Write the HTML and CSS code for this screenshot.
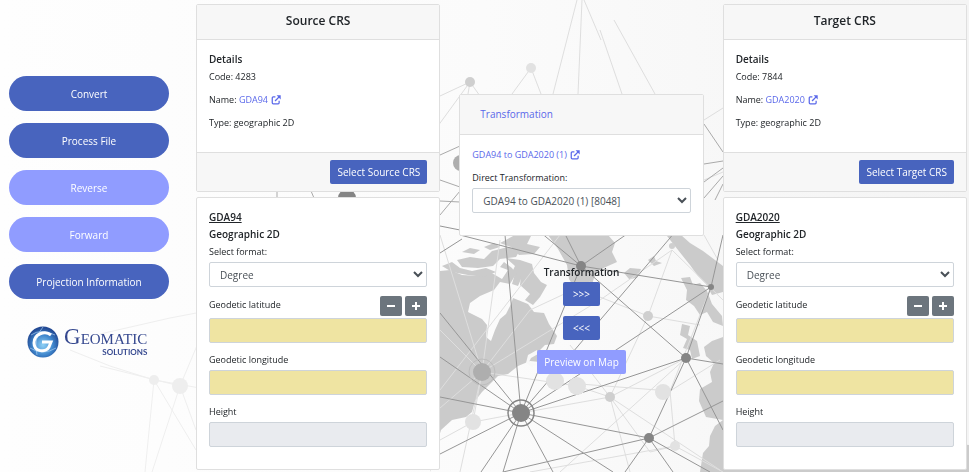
FILE: index.html
```html
<!DOCTYPE html>
<html lang="en">
<head>
    <meta charset="UTF-8">
    <meta name="viewport" content="width=device-width, initial-scale=1">
    <title>Geomatic Solutions</title>
    <link rel="stylesheet" href="styles.css">
</head>
<body>
<svg class="backdrop" viewBox="0 0 969 472" preserveAspectRatio="xMidYMid slice" aria-hidden="true">
    <defs>
        <linearGradient id="paper" x1="0" y1="0" x2="1" y2="0">
            <stop offset="0" stop-color="#fefefe"/>
            <stop offset="0.5" stop-color="#fbfbfb"/>
            <stop offset="1" stop-color="#f4f4f4"/>
        </linearGradient>
    </defs>
    <rect width="969" height="472" fill="url(#paper)"/>
    <!-- land -->
    <g fill="#cbcbcb">
        <path d="M430 272 L450 270 462 275 478 276 490 272 502 279 508 270 500 267 504 262 512 268 516 274 510 284 500 282 494 290 480 296 470 303 468 312 482 319 487 325 486 337 491 341 495 330 500 319 506 314 511 304 513 298 528 304 534 312 544 313 549 324 557 336 554 344 545 345 540 350 546 352 556 356 552 360 540 362 530 361 518 366 508 374 498 376 490 384 482 392 475 401 472 412 466 417 452 420 441 430 438 440 430 472Z"/>
        <path d="M457 260 L470 257 484 259 492 251 508 247 520 250 516 257 500 259 493 266 478 268 462 267Z"/>
        <path d="M442 266 L452 262 460 268 472 271 486 268 496 272 484 277 468 275 452 272Z"/>
        <path d="M462 252 L470 248 480 250 474 254ZM484 247 L494 243 500 247 490 250ZM522 262 L516 270 512 284 518 286 524 272 527 264Z"/>
        <path d="M506 258 L520 260 532 264 534 273 541 282 547 285 540 297 533 305 525 300 530 294 520 285 521 276 512 272 515 266Z"/>
        <path d="M500 243 L515 235 532 234 527 244 540 247 534 254 519 255 511 247Z"/>
        <path d="M548 235 L608 235 615 243 612 252 617 262 608 266 599 270 594 278 589 294 583 296 575 289 569 279 567 265 558 249Z"/>
        <path d="M624 273 L630 268 641 269 637 278 629 279Z"/>
        <path d="M648 260 L654 256 656 261 662 263 654 266Z"/>
        <path d="M667 236 L681 235 690 243 703 251 723 266 723 292 712 295 706 284 698 276 690 265 682 255Z"/>
        <path d="M681 278 L690 277 693 285 700 283 707 291 712 304 722 316 723 326 713 322 707 312 700 315 694 306 686 300 687 290Z"/>
        <path d="M682 324 L690 326 688 335 697 341 700 356 692 359 690 350 683 348 687 339 680 335Z"/>
        <path d="M723 337 L712 341 704 347 706 356 714 363 710 372 712 382 700 389 699 401 706 417 723 420Z"/>
        <path d="M723 420 L715 426 710 436 709 446 703 453 700 472 969 472 969 445Z"/>
        <path d="M528 355 L537 350 538 354 531 358 529 362 536 364 532 367 526 363Z" fill="#f8f8f8"/>
    </g>
    <!-- faint links -->
    <g stroke="#efefef" fill="none">
        <path d="M212 310 L170 318 100 334M212 310 L240 270M212 310 L230 330M154 380 L110 366 70 350M154 380 L200 388M154 380 L145 472M154 380 L196 450M180 386 L212 310M180 386 L152 472M180 386 L196 430M180 386 L100 366"/>
    </g>
    <g stroke="#dedede" fill="none">
        <path d="M470 82 L440 96M470 82 L435 130M470 82 L467 100M470 82 L490 110M531 68 L512 94M531 68 L541 94M577 0 L553 94M582 0 L578 94M600 30 L622 94M614 20 L655 94M601 40 L584 0"/>
        <path d="M482 372 L440 330M482 372 L530 310 590 282M482 372 L440 408M482 372 L460 472M482 372 L500 240M482 372 L577 386 610 397M672 250 L648 316 610 397 650 452 675 446M648 316 L700 325M648 316 L582 290M610 397 L686 358M610 397 L521 413M610 397 L570 345M610 397 L720 470M610 397 L630 472M580 384 L670 391 720 360M670 391 L711 287M670 391 L675 446M672 250 L723 300M473 422 L521 413M473 422 L440 440M473 422 L482 372M672 250 L600 300 482 372M675 446 L723 472M704 120 L723 108M704 180 L723 172M704 235 L718 260M440 390 L560 235M440 235 L482 372M560 472 L686 358M530 472 L675 446"/>
    </g>
    <!-- strong links -->
    <g stroke="#969696" fill="none">
        <path d="M521 413 L440 313M521 413 L440 357M521 413 L440 397M521 413 L440 454M521 413 L481 472M521 413 L503 472M521 413 L553 472M521 413 L613 472M521 413 L505 235M521 413 L581 266M521 413 L670 238 680 225M521 413 L711 287M521 413 L686 358M521 413 L649 438M649 438 L503 472M649 438 L625 472M649 438 L673 472M649 438 L686 358M649 438 L723 401M649 438 L710 472M686 358 L711 287M686 358 L581 266M686 358 L723 364M686 358 L723 430M711 287 L581 266M711 287 L723 235M581 266 L460 235M581 266 L540 232M581 266 L564 232M581 266 L627 234M440 226 L460 230M440 253 L462 239"/>
        <path d="M440 155 L460 146M440 180 L460 187M440 201 L460 202M440 215 L460 191M704 164 L723 161M704 182 L723 168M704 198 L723 176M704 124 L723 152M277 191 L277 198M311 191 L314 198M723 184 L715 200" stroke="#aaa"/>
        <circle cx="521" cy="413" r="13" stroke="#858585" stroke-width="1.5"/>
        <circle cx="482" cy="372" r="13" stroke="#bdbdbd"/>
    </g>
    <g fill="#858585">
        <circle cx="521" cy="413" r="9"/>
        <circle cx="649" cy="438" r="5"/>
        <circle cx="686" cy="358" r="5"/>
        <circle cx="581" cy="266" r="5"/>
        <circle cx="711" cy="287" r="3"/>
        <circle cx="347" cy="198" r="9"/>
    </g>
    <g fill="#aeaeae">
        <circle cx="482" cy="372" r="9"/>
        <circle cx="461" cy="163" r="8"/>
    </g>
    <g fill="#cfcfcf">
        <circle cx="470" cy="82" r="5"/>
        <circle cx="610" cy="397" r="5"/>
        <circle cx="648" cy="316" r="5"/>
        <circle cx="212" cy="310" r="5"/>
        <circle cx="672" cy="246" r="3"/>
    </g>
    <g fill="#e2e2e2">
        <circle cx="531" cy="68" r="5"/>
        <circle cx="577" cy="386" r="9"/>
        <circle cx="555" cy="381" r="9"/>
        <circle cx="663" cy="392" r="8"/>
        <circle cx="473" cy="422" r="8"/>
        <circle cx="675" cy="446" r="5"/>
    </g>
    <g fill="#eeeeee">
        <circle cx="154" cy="380" r="5"/>
        <circle cx="180" cy="386" r="8"/>
    </g>
</svg>

<svg class="symbols" aria-hidden="true">
    <symbol id="external" viewBox="0 0 16 16">
        <path d="M7 3H3.500Q2 3 2 4.500V12.500Q2 14 3.500 14H11.500Q13 14 13 12.500V9" fill="none" stroke="currentColor" stroke-width="2"/>
        <path d="M6.500 9.500L13 3" fill="none" stroke="currentColor" stroke-width="2.200"/>
        <path d="M9 0.500H15.500V7Z" fill="currentColor"/>
    </symbol>
</svg>

<div class="page">
    <aside class="sidebar">
        <nav class="menu">
            <button type="button" class="pill">Convert</button>
            <button type="button" class="pill">Process File</button>
            <button type="button" class="pill pill-light">Reverse</button>
            <button type="button" class="pill pill-light">Forward</button>
            <button type="button" class="pill">Projection Information</button>
        </nav>
        <div class="logo">
            <svg class="logo-mark" viewBox="0 0 32 32" aria-hidden="true">
                <defs>
                    <radialGradient id="globe" cx="0.5" cy="0.6" r="0.55">
                        <stop offset="0" stop-color="#8fd0f5"/>
                        <stop offset="0.6" stop-color="#3f86cc"/>
                        <stop offset="1" stop-color="#234a94"/>
                    </radialGradient>
                </defs>
                <circle cx="16" cy="16" r="15.500" fill="url(#globe)"/>
                <path d="M4 9Q14 2 28 9M16 1Q6 12 10 29M3 22Q16 30 29 22" fill="none" stroke="#a8cdf0" stroke-width="0.700"/>
                <path d="M24 9C18 4 7 8 7 17C7 26 19 27 22 21L24 16H15" fill="none" stroke="#fff" stroke-width="3"/>
            </svg>
            <div class="logo-text">
                <span class="logo-name"><span class="logo-cap">G</span>EOMATIC</span>
                <span class="logo-sub">SOLUTIONS</span>
            </div>
        </div>
    </aside>

    <section class="column">
        <div class="card">
            <h2 class="card-header">Source CRS</h2>
            <div class="card-body details">
                <h3>Details</h3>
                <p>Code: 4283</p>
                <p>Name: <a href="#">GDA94 <svg class="icon"><use href="#external"/></svg></a></p>
                <p>Type: geographic 2D</p>
            </div>
            <div class="card-footer">
                <button type="button" class="btn">Select Source CRS</button>
            </div>
        </div>
        <form class="card card-body coords">
            <h3><u>GDA94</u></h3>
            <h3>Geographic 2D</h3>
            <label for="source-format">Select format:</label>
            <select id="source-format" class="control">
                <option>Degree</option>
            </select>
            <div class="label-row">
                <label for="source-lat">Geodetic latitude</label>
                <div class="steps">
                    <button type="button" class="step" aria-label="Fewer decimals"><svg viewBox="0 0 10 10"><path d="M1 5H9"/></svg></button>
                    <button type="button" class="step" aria-label="More decimals"><svg viewBox="0 0 10 10"><path d="M1 5H9M5 1V9"/></svg></button>
                </div>
            </div>
            <input type="text" id="source-lat" class="control required">
            <label for="source-lon">Geodetic longitude</label>
            <input type="text" id="source-lon" class="control required">
            <label for="source-height">Height</label>
            <input type="text" id="source-height" class="control" disabled>
        </form>
    </section>

    <section class="column column-middle">
        <div class="card">
            <div class="card-header tab"><a href="#">Transformation</a></div>
            <div class="card-body transform">
                <p><a href="#">GDA94 to GDA2020 (1) <svg class="icon"><use href="#external"/></svg></a></p>
                <label for="direct">Direct Transformation:</label>
                <select id="direct" class="control">
                    <option>GDA94 to GDA2020 (1) [8048]</option>
                </select>
            </div>
        </div>
        <div class="actions">
            <h3>Transformation</h3>
            <button type="button" class="btn">&gt;&gt;&gt;</button>
            <button type="button" class="btn">&lt;&lt;&lt;</button>
            <button type="button" class="btn btn-light">Preview on Map</button>
        </div>
    </section>

    <section class="column">
        <div class="card">
            <h2 class="card-header">Target CRS</h2>
            <div class="card-body details">
                <h3>Details</h3>
                <p>Code: 7844</p>
                <p>Name: <a href="#">GDA2020 <svg class="icon"><use href="#external"/></svg></a></p>
                <p>Type: geographic 2D</p>
            </div>
            <div class="card-footer">
                <button type="button" class="btn">Select Target CRS</button>
            </div>
        </div>
        <form class="card card-body coords">
            <h3><u>GDA2020</u></h3>
            <h3>Geographic 2D</h3>
            <label for="target-format">Select format:</label>
            <select id="target-format" class="control">
                <option>Degree</option>
            </select>
            <div class="label-row">
                <label for="target-lat">Geodetic latitude</label>
                <div class="steps">
                    <button type="button" class="step" aria-label="Fewer decimals"><svg viewBox="0 0 10 10"><path d="M1 5H9"/></svg></button>
                    <button type="button" class="step" aria-label="More decimals"><svg viewBox="0 0 10 10"><path d="M1 5H9M5 1V9"/></svg></button>
                </div>
            </div>
            <input type="text" id="target-lat" class="control required">
            <label for="target-lon">Geodetic longitude</label>
            <input type="text" id="target-lon" class="control required">
            <label for="target-height">Height</label>
            <input type="text" id="target-height" class="control" disabled>
        </form>
    </section>
</div>
</body>
</html>
```
FILE: styles.css
```css
* {
    box-sizing: border-box;
}

body {
    margin: 0;
    font-family: "Open Sans", "Noto Sans", sans-serif;
    font-size: 9px;
    line-height: 17px;
    color: #212529;
    background-color: #fbfbfb;
}

h2, h3, p {
    margin: 0;
}

h3 {
    font-size: 10px;
    font-weight: 600;
    line-height: 17px;
}

a {
    color: #5a68ea;
    text-decoration: none;
}

button, input, select {
    font-family: inherit;
}

.backdrop {
    position: fixed;
    top: 0;
    left: 0;
    width: 100%;
    height: 100%;
    z-index: -1;
}

.symbols {
    display: none;
}

.page {
    display: grid;
    grid-template-columns: 168px repeat(3, 1fr);
    column-gap: 19px;
    padding: 4px 2px 3px 9px;
}

/* Sidebar */
.sidebar {
    padding: 72px 8px 0 0;
}

.menu {
    display: flex;
    flex-direction: column;
    gap: 12px;
}

.pill {
    height: 35px;
    border: none;
    border-radius: 18px;
    background-color: #4864be;
    color: white;
    font-size: 10px;
    cursor: pointer;
}

.pill-light {
    background-color: #909cff;
}

.logo {
    display: flex;
    align-items: center;
    gap: 5px;
    margin: 27px 0 0 18px;
}

.logo-mark {
    width: 32px;
    height: 32px;
}

.logo-text {
    display: flex;
    flex-direction: column;
    align-items: flex-end;
    font-family: "Liberation Serif", serif;
    color: #35488f;
}

.logo-name {
    font-size: 15px;
    line-height: 18px;
}

.logo-cap {
    font-size: 23px;
}

.logo-sub {
    font-family: Lato, sans-serif;
    font-size: 8px;
    font-weight: 700;
    line-height: 8px;
}

/* Cards */
.column {
    display: flex;
    flex-direction: column;
    gap: 5px;
}

.column-middle {
    padding-top: 90px;
}

.card {
    background-color: white;
    border: 1px solid #dfdfdf;
    border-radius: 2px;
}

.card-header {
    padding: 6px 12px 8px;
    background-color: #f7f7f7;
    border-bottom: 1px solid #dfdfdf;
    font-size: 12px;
    font-weight: 600;
    line-height: 20px;
    text-align: center;
}

.tab {
    padding: 9px 20px 10px;
    font-size: 10px;
    font-weight: 400;
    text-align: left;
}

.card-body {
    padding: 11px 12px;
}

.details {
    padding-bottom: 15px;
}

.details p {
    margin-bottom: 6px;
}

.card-footer {
    display: flex;
    justify-content: flex-end;
    padding: 7px 12px;
    background-color: #f7f7f7;
    border-top: 1px solid #dfdfdf;
}

.icon {
    width: 10px;
    height: 10px;
    margin-left: 1px;
    vertical-align: -2px;
}

.btn {
    min-width: 37px;
    height: 24px;
    padding: 0 7px;
    border: none;
    border-radius: 2px;
    background-color: #4864be;
    color: white;
    font-size: 10px;
    cursor: pointer;
}

.btn-light {
    background-color: #909cff;
}

/* Forms */
.control {
    width: 100%;
    height: 25px;
    border: 1px solid #ced4da;
    border-radius: 2px;
    background-color: white;
    color: #495057;
    font-size: 10px;
}

select.control {
    padding: 0 0 0 6px;
}

.required {
    background-color: #efe4a2;
}

.control:disabled {
    background-color: #e9ebef;
}

.coords, .transform {
    display: flex;
    flex-direction: column;
    padding-bottom: 22px;
}

.coords label {
    margin-bottom: 2px;
}

.coords input + label {
    margin-top: 8px;
}

.label-row {
    display: flex;
    justify-content: space-between;
    margin: 9px 0 2px;
}

.steps {
    display: flex;
    gap: 3px;
}

.step {
    display: flex;
    align-items: center;
    justify-content: center;
    width: 22px;
    height: 20px;
    padding: 0;
    border: none;
    border-radius: 2px;
    background-color: #6c757d;
}

.step svg {
    width: 10px;
    height: 10px;
    stroke: white;
    stroke-width: 2;
}

.transform p {
    margin-bottom: 6px;
}

.transform label {
    margin-bottom: 2px;
}

.actions {
    display: flex;
    flex-direction: column;
    align-items: center;
    gap: 10px;
    padding-top: 23px;
}

.actions h3 {
    margin-bottom: -9px;
}
```
